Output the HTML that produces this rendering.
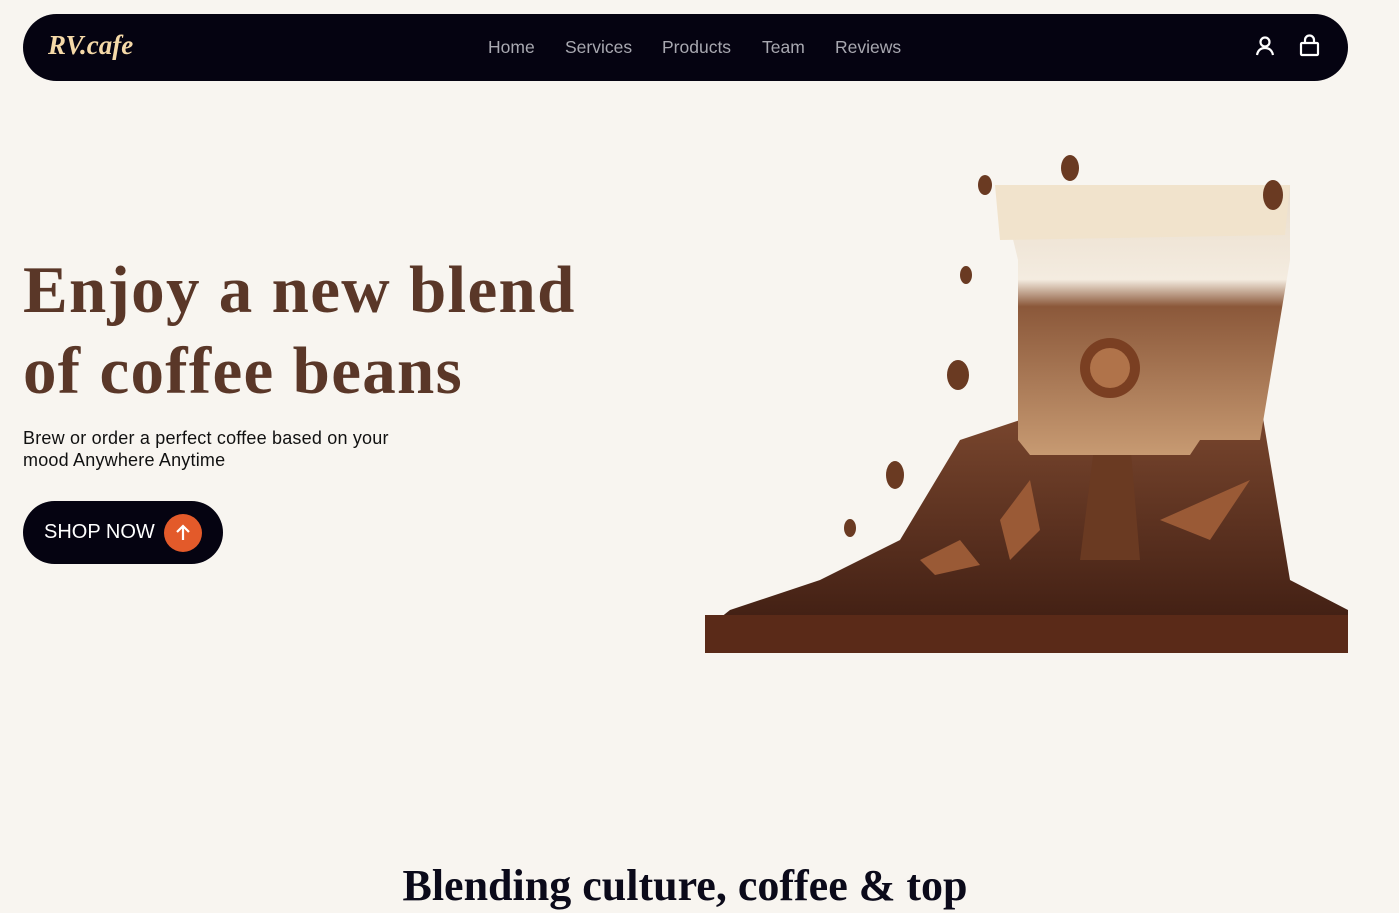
<!DOCTYPE html>
<html><head><meta charset="utf-8"><style>
*{margin:0;padding:0;box-sizing:border-box}
body{width:1399px;height:913px;overflow:hidden;background:#f8f5f0;font-family:"Liberation Sans",sans-serif;position:relative}
nav{position:absolute;left:23px;top:14px;width:1325px;height:67px;background:#050311;border-radius:34px}
.logo{position:absolute;left:25px;top:16px;font:italic bold 27px "Liberation Serif",serif;color:#f5d9a8}
.links{position:absolute;left:465px;top:23px;font-size:17.5px;color:#a8a8b0}
.links span{position:absolute;white-space:nowrap}
h1{position:absolute;left:23px;top:250px;font:bold 67px/81px "Liberation Serif",serif;color:#5a3728;letter-spacing:1.3px}
p.sub{position:absolute;left:23px;top:427px;font-size:18px;line-height:22px;color:#111;width:400px;letter-spacing:0.2px}
.btn{position:absolute;left:23px;top:501px;width:200px;height:63px;background:#050311;border-radius:32px;color:#fff;font-size:20px}
.btn span{position:absolute;left:21px;top:20px}
.btn i{position:absolute;left:141px;top:13px;width:38px;height:38px;border-radius:50%;background:#e35a2a}
h2{position:absolute;left:0;width:1370px;text-align:center;top:860px;font:bold 44px "Liberation Serif",serif;color:#0b0a1a}
</style></head><body>
<nav><div class="logo">RV.cafe</div>
<div class="links"><span style="left:0">Home</span><span style="left:77px">Services</span><span style="left:174px">Products</span><span style="left:274px">Team</span><span style="left:347px">Reviews</span></div>
<svg style="position:absolute;left:1230px;top:20px" width="100" height="30" viewBox="0 0 100 30" fill="none" stroke="#fff" stroke-width="2.2"><circle cx="12" cy="8" r="4.5"/><path d="M4 21c1-5 4-7 8-7s7 2 8 7"/><rect x="48" y="9" width="17" height="12" rx="1"/><path d="M52 10V6a4.5 4.5 0 0 1 9 0v4"/></svg>
</nav>
<h1>Enjoy a new blend<br>of coffee beans</h1>
<p class="sub">Brew or order a perfect coffee based on your mood Anywhere Anytime</p>
<div class="btn"><span>SHOP NOW</span><i><svg width="38" height="38" viewBox="0 0 38 38" fill="none" stroke="#fff" stroke-width="2.2"><path d="M19 26V12M13 18l6-6 6 6"/></svg></i></div>
<svg style="position:absolute;left:700px;top:140px" width="660" height="520" viewBox="0 0 660 520">
<defs><linearGradient id="g1" x1="0" y1="0" x2="0" y2="1"><stop offset="0" stop-color="#8a5236"/><stop offset="1" stop-color="#3a1a10"/></linearGradient>
<linearGradient id="g2" x1="0" y1="0" x2="0" y2="1"><stop offset="0" stop-color="#e9dccb"/><stop offset=".35" stop-color="#f4ece0"/><stop offset=".45" stop-color="#8b583a"/><stop offset="1" stop-color="#c79a72"/></linearGradient></defs>
<path d="M5 490 L30 470 L120 440 L200 400 L260 300 L320 280 L420 300 L560 210 L560 260 L590 440 L648 470 L648 512 L5 512Z" fill="url(#g1)"/>
<rect x="5" y="475" width="643" height="38" fill="#5a2a18"/>
<path d="M395 300 L380 420 L440 420 L430 300Z" fill="#6a3a22"/>
<path d="M300 45 L590 45 L590 120 L560 300 L500 300 L490 315 L330 315 L318 300 L318 120Z" fill="url(#g2)"/>
<path d="M295 45 L590 45 L585 95 L300 100Z" fill="#f1e3cc"/>
<circle cx="410" cy="228" r="30" fill="#7a3f22"/><circle cx="410" cy="228" r="20" fill="#b0734a"/>
<path d="M220 420 l40-20 20 25 -45 10z M300 380 l30-40 10 50 -30 30z M460 380 l90-40 -40 60z" fill="#9a5a36"/>
<g fill="#6a3a22"><ellipse cx="370" cy="28" rx="9" ry="13"/><ellipse cx="285" cy="45" rx="7" ry="10"/><ellipse cx="573" cy="55" rx="10" ry="15"/><ellipse cx="266" cy="135" rx="6" ry="9"/><ellipse cx="258" cy="235" rx="11" ry="15"/><ellipse cx="195" cy="335" rx="9" ry="14"/><ellipse cx="150" cy="388" rx="6" ry="9"/></g>
</svg>
<h2>Blending culture, coffee &amp; top</h2>
</body></html>
